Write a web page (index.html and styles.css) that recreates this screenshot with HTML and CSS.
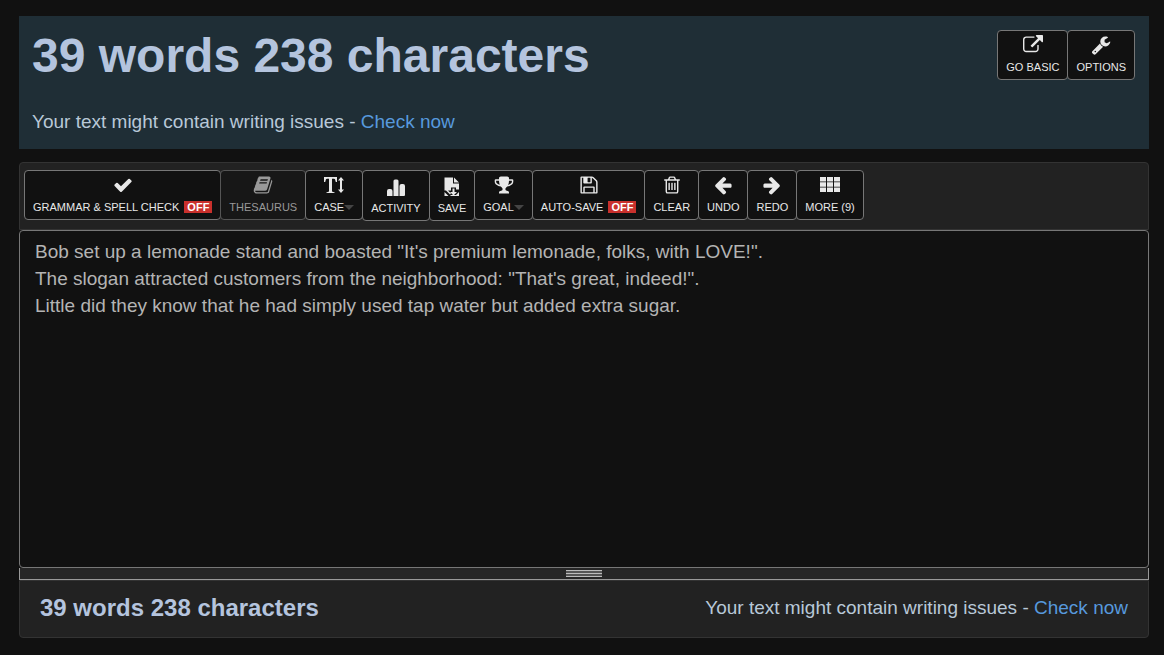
FILE: index.html
```
<!DOCTYPE html>
<html lang="en">
<head>
<meta charset="utf-8">
<meta name="viewport" content="width=device-width, initial-scale=1">
<title>Word Counter</title>
<link rel="stylesheet" href="styles.css">
</head>
<body>
<header class="summary">
  <div class="summary-text">
    <h1 class="count">39 words 238 characters</h1>
    <p class="notice">Your text might contain writing issues - <a href="#check">Check now</a></p>
  </div>
  <div class="buttons">
    <button class="tool" type="button">
      <svg class="icon" viewBox="0 0 1792 1792" aria-hidden="true"><path d="M1408 928v320q0 119-84.500 203.500t-203.500 84.500h-832q-119 0-203.500-84.500t-84.500-203.500v-832q0-119 84.500-203.500t203.500-84.500h704q14 0 23 9t9 23v64q0 14-9 23t-23 9h-704q-66 0-113 47t-47 113v832q0 66 47 113t113 47h832q66 0 113-47t47-113v-320q0-14 9-23t23-9h64q14 0 23 9t9 23zm384-864v512q0 26-19 45t-45 19-45-19l-176-176-652 652q-10 10-23 10t-23-10l-114-114q-10-10-10-23t10-23l652-652-176-176q-19-19-19-45t19-45 45-19h512q26 0 45 19t19 45z"/></svg>
      <span class="label">GO BASIC</span>
    </button>
    <button class="tool" type="button">
      <svg class="icon" viewBox="0 0 1792 1792" aria-hidden="true"><path d="M448 1472q0-26-19-45t-45-19-45 19-19 45 19 45 45 19 45-19 19-45zm644-420l-682 682q-37 37-90 37-52 0-91-37l-106-108q-38-36-38-90 0-53 38-91l681-681q39 98 114.500 173.500t173.500 114.500zm634-435q0 39-23 106-47 134-164.500 217.500t-258.500 83.500q-185 0-316.500-131.500t-131.500-316.500 131.500-316.500 316.500-131.500q58 0 121.500 16.500t107.500 46.500q16 11 16 28t-16 28l-293 169v224l193 107q5-3 79-48.500t135.500-81 70.500-35.500q15 0 23.500 10t8.500 25z"/></svg>
      <span class="label">OPTIONS</span>
    </button>
  </div>
</header>

<main class="editor">
  <div class="toolbar buttons" role="toolbar" aria-label="Editor tools">
    <button class="tool" type="button">
      <svg class="icon" viewBox="0 0 1792 1792" aria-hidden="true"><path d="M1671 566q0 40-28 68l-724 724-136 136q-28 28-68 28t-68-28l-136-136-362-362q-28-28-28-68t28-68l136-136q28-28 68-28t68 28l294 295 656-657q28-28 68-28t68 28l136 136q28 28 28 68z"/></svg>
      <span class="label">GRAMMAR &amp; SPELL CHECK <span class="off">OFF</span></span>
    </button>
    <button class="tool" type="button" disabled>
      <svg class="icon" viewBox="0 0 1792 1792" aria-hidden="true"><path d="M1703 478q40 57 18 129l-275 906q-19 64-76.500 107.500t-122.500 43.500h-923q-77 0-148.500-53.500t-99.500-131.500q-24-67-2-127 0-4 3-27t4-37q1-8-3-21.500t-3-19.500q2-11 8-21t16.500-23.500 16.500-23.500q23-38 45-91.500t30-91.500q3-10 .5-30t-.5-28q3-11 17-28t17-23q21-36 42-92t25-90q1-9-2.500-32t.5-28q4-13 22-30.500t22-22.500q19-26 42.500-84.500t27.500-96.500q1-8-3-25.500t-2-26.500q2-8 9-18t18-23 17-21q8-12 16.500-30.500t15-35 16-36 19.500-32 26.500-23.500 36-11.500 47.500 5.500l-1 3q38-9 51-9h761q74 0 114 56t18 130l-274 906q-36 119-71.500 153.500t-128.500 34.500h-869q-27 0-38 15-11 16-1 43 24 70 144 70h923q29 0 56-15.500t35-41.500l300-987q7-22 5-57 38 15 59 43zm-1064 2q-4 13 2 22.500t20 9.500h608q13 0 25.500-9.500t16.500-22.500l21-64q4-13-2-22.500t-20-9.500h-608q-13 0-25.500 9.500t-16.500 22.500zm-83 256q-4 13 2 22.500t20 9.500h608q13 0 25.500-9.500t16.500-22.500l21-64q4-13-2-22.500t-20-9.500h-608q-13 0-25.500 9.500t-16.500 22.500z"/></svg>
      <span class="label">THESAURUS</span>
    </button>
    <button class="tool" type="button">
      <svg class="icon" viewBox="0 0 20 20" aria-hidden="true"><path d="M0 2h13v5h-1.200l-.8-2.700q-.3-.6-1-.6H8V16q0 .8.800.9l1.700.3V18h-8v-.8l1.700-.3q.8-.1.800-.9V3.700H3q-.7 0-1 .6L1.200 7H0zM17 2l3 3.500h-2v9h2L17 18l-3-3.500h2v-9h-2z"/></svg>
      <span class="label">CASE<span class="caret"></span></span>
    </button>
    <button class="tool tall" type="button">
      <svg class="icon" viewBox="0 0 20 20" aria-hidden="true"><path d="M1 20v-5q0-2 2-2h1.500q2 0 2 2v5zM7.500 20V5q0-1.500 1.500-1.500h2q1.500 0 1.500 1.500v15zM13.500 20V10q0-2 2-2H17q2 0 2 2v9q0 1-1 1z"/></svg>
      <span class="label">ACTIVITY</span>
    </button>
    <button class="tool tall" type="button">
      <svg class="icon" viewBox="0 0 20 20" aria-hidden="true"><path d="M2.500 1.500H11v6h6v6h-3v-2H9v3H6l3 3-1 1-4-4H2.500zM12 1.500l5 5h-5zM10.500 12.500h2v3.500H15l-3.500 3.500L8 16h2.500zM2.500 16L6.500 20h-4zM17 16v4h-4zM8 20l1-1h5l1 1z"/></svg>
      <span class="label">SAVE</span>
    </button>
    <button class="tool" type="button">
      <svg class="icon" viewBox="0 0 1792 1792" aria-hidden="true"><path d="M522 883q-74-162-74-371h-256v96q0 78 94.500 162t235.500 113zm1078-275v-96h-256q0 209-74 371 141-29 235.500-113t94.500-162zm128-128v128q0 71-41.500 143t-112 130-173 97.500-215.500 44.500q-42 54-95 95-38 34-52.500 72.500t-14.500 89.500q0 54 30.500 91t97.500 37q75 0 133.500 45.500t58.500 114.500v64q0 14-9 23t-23 9h-832q-14 0-23-9t-9-23v-64q0-69 58.500-114.500t133.500-45.500q67 0 97.500-37t30.500-91q0-51-14.500-89.500t-52.500-72.500q-53-41-95-95-113-5-215.500-44.500t-173-97.500-112-130-41.500-143v-128q0-40 28-68t68-28h288v-96q0-66 47-113t113-47h576q66 0 113 47t47 113v96h288q40 0 68 28t28 68z"/></svg>
      <span class="label">GOAL<span class="caret"></span></span>
    </button>
    <button class="tool" type="button">
      <svg class="icon" viewBox="0 0 1792 1792" aria-hidden="true"><path d="M512 1536h768v-384h-768v384zm896 0h128v-896q0-14-10-38.500t-20-34.500l-281-281q-10-10-34-20t-39-10v416q0 40-28 68t-68 28h-576q-40 0-68-28t-28-68v-416h-128v1280h128v-416q0-40 28-68t68-28h832q40 0 68 28t28 68v416zm-384-928v-320q0-13-9.500-22.500t-22.500-9.500h-192q-13 0-22.500 9.500t-9.500 22.500v320q0 13 9.500 22.500t22.500 9.500h192q13 0 22.500-9.500t9.500-22.500zm640 32v928q0 40-28 68t-68 28h-1344q-40 0-68-28t-28-68v-1344q0-40 28-68t68-28h928q40 0 88 20t76 48l280 280q28 28 48 76t20 88z"/></svg>
      <span class="label">AUTO-SAVE <span class="off">OFF</span></span>
    </button>
    <button class="tool" type="button">
      <svg class="icon" viewBox="0 0 1792 1792" aria-hidden="true"><path d="M704 736v576q0 14-9 23t-23 9h-64q-14 0-23-9t-9-23v-576q0-14 9-23t23-9h64q14 0 23 9t9 23zm256 0v576q0 14-9 23t-23 9h-64q-14 0-23-9t-9-23v-576q0-14 9-23t23-9h64q14 0 23 9t9 23zm256 0v576q0 14-9 23t-23 9h-64q-14 0-23-9t-9-23v-576q0-14 9-23t23-9h64q14 0 23 9t9 23zm128 724v-948h-896v948q0 22 7 40.500t14.500 27 10.500 8.500h832q3 0 10.500-8.500t14.500-27 7-40.500zm-672-1076h448l-48-117q-7-9-17-11h-317q-10 2-17 11zm928 32v64q0 14-9 23t-23 9h-96v948q0 83-47 143.500t-113 60.500h-832q-66 0-113-58.500t-47-141.500v-952h-96q-14 0-23-9t-9-23v-64q0-14 9-23t23-9h309l70-167q15-37 54-63t79-26h320q40 0 79 26t54 63l70 167h309q14 0 23 9t9 23z"/></svg>
      <span class="label">CLEAR</span>
    </button>
    <button class="tool" type="button">
      <svg class="icon" viewBox="0 0 1792 1792" aria-hidden="true"><path d="M1664 896v128q0 53-32.500 90.500t-84.500 37.500h-704l293 294q38 36 38 90t-38 90l-75 76q-37 37-90 37-52 0-91-37l-651-652q-37-37-37-90 0-52 37-91l651-650q38-38 91-38 52 0 90 38l75 74q38 38 38 91t-38 91l-293 293h704q52 0 84.500 37.500t32.500 90.500z"/></svg>
      <span class="label">UNDO</span>
    </button>
    <button class="tool" type="button">
      <svg class="icon" viewBox="0 0 1792 1792" aria-hidden="true"><path transform="translate(1792 0) scale(-1 1)" d="M1664 896v128q0 53-32.500 90.500t-84.500 37.500h-704l293 294q38 36 38 90t-38 90l-75 76q-37 37-90 37-52 0-91-37l-651-652q-37-37-37-90 0-52 37-91l651-650q38-38 91-38 52 0 90 38l75 74q38 38 38 91t-38 91l-293 293h704q52 0 84.500 37.500t32.500 90.500z"/></svg>
      <span class="label">REDO</span>
    </button>
    <button class="tool" type="button">
      <svg class="icon" viewBox="0 0 20 20" aria-hidden="true"><path d="M0 2h6v4.500H0zM7 2h6v4.500H7zM14 2h6v4.500h-6zM0 7.300h6v4.500H0zM7 7.300h6v4.500H7zM14 7.300h6v4.500h-6zM0 12.600h6V17H0zM7 12.600h6V17H7zM14 12.600h6V17h-6z"/></svg>
      <span class="label">MORE (9)</span>
    </button>
  </div>

  <textarea class="text" aria-label="Your text" spellcheck="false">Bob set up a lemonade stand and boasted "It's premium lemonade, folks, with LOVE!".
The slogan attracted customers from the neighborhood: "That's great, indeed!".
Little did they know that he had simply used tap water but added extra sugar.</textarea>
  <div class="resizer"><span class="grip"></span></div>

  <footer class="footer">
    <h2 class="footer-count">39 words 238 characters</h2>
    <p class="notice">Your text might contain writing issues - <a href="#check">Check now</a></p>
  </footer>
</main>
</body>
</html>
```

FILE: styles.css
```
* {
  box-sizing: border-box;
}

body {
  display: flex;
  flex-direction: column;
  gap: 13px;
  min-height: 100vh;
  margin: 0;
  padding: 16px 15px 17px 19px;
  background: #111;
  color: #b4c4de;
  font-family: "Liberation Sans", Arial, sans-serif;
}

.summary {
  display: flex;
  align-items: flex-start;
  justify-content: space-between;
  padding: 12px 14px 13px 13px;
  background: #1f2e36;
}

.count {
  margin: 0 0 24px;
  font-size: 48px;
  line-height: 56px;
}

.notice {
  margin: 0;
  color: #b8c8d8;
  font-size: 19px;
  line-height: 28px;
}

.notice a {
  color: #5799dd;
  text-decoration: none;
}

.buttons {
  display: flex;
  align-items: flex-start;
}

.summary .buttons {
  padding-top: 2px;
}

.tool {
  margin: 0;
  padding: 4px 8px;
  border: 1px solid #777;
  border-radius: 4px;
  background: #111;
  color: #e8e8e8;
  font-family: inherit;
  font-size: 11px;
  line-height: 16px;
  white-space: nowrap;
}

.tool + .tool {
  margin-left: -1px;
}

.tool:disabled {
  border-color: #555;
  background: #171717;
  color: #999;
}

.tall {
  padding-top: 5px;
}

.icon {
  display: block;
  width: 20px;
  height: 20px;
  margin: 0 auto 4px;
  fill: currentColor;
}

.label {
  display: block;
}

.off {
  display: inline-block;
  margin-left: 2px;
  padding: 0 3px;
  background: #c9302c;
  color: #fff;
  font-weight: bold;
  line-height: 12px;
}

.caret {
  display: inline-block;
  border: 5px solid transparent;
  border-top-color: #444;
  border-bottom: 0;
  vertical-align: 1px;
}

.editor {
  display: flex;
  flex: 1;
  flex-direction: column;
}

.toolbar {
  padding: 7px 4px 8px;
  border: 1px solid #333;
  border-radius: 4px 4px 0 0;
  background: #222;
}

.text {
  flex: 1;
  width: 100%;
  padding: 7px 15px;
  border: 1px solid #777;
  border-radius: 4px;
  outline: 0;
  background: #111;
  color: #b4b4b4;
  font-family: inherit;
  font-size: 19px;
  line-height: 27px;
  resize: none;
}

.resizer {
  display: flex;
  align-items: center;
  justify-content: center;
  height: 12px;
  border: 1px solid #999;
  border-top: 0;
  background: #262626;
  cursor: row-resize;
}

.grip {
  width: 36px;
  height: 7px;
  background: repeating-linear-gradient(#bbb 0 1px, #555 1px 3px);
}

.footer {
  display: flex;
  align-items: center;
  justify-content: space-between;
  padding: 12px 20px 14px;
  border: 1px solid #333;
  border-radius: 0 0 4px 4px;
  background: #222;
}

.footer-count {
  margin: 0;
  font-size: 24px;
  line-height: 30px;
}
```
